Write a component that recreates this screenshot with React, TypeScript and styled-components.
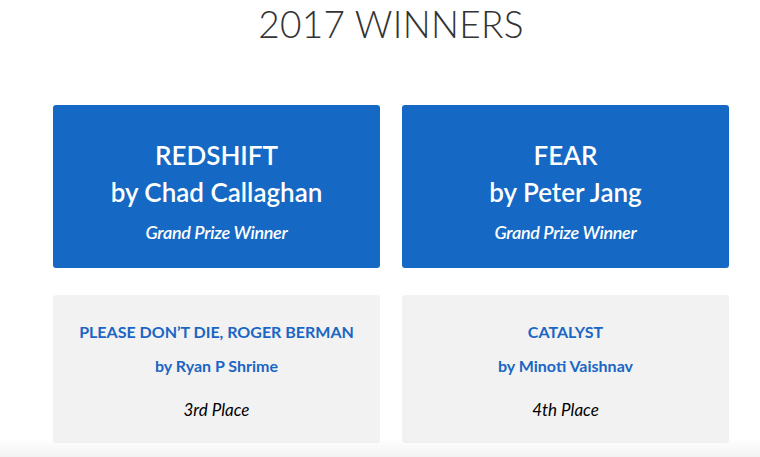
import { createGlobalStyle, styled } from 'styled-components';

interface IWinner {
    title: string
    author: string
    prize: string
}

const grand: IWinner[] = [
    { title: 'REDSHIFT', author: 'by Chad Callaghan', prize: 'Grand Prize Winner' },
    { title: 'FEAR', author: 'by Peter Jang', prize: 'Grand Prize Winner' },
]

const placed: IWinner[] = [
    { title: 'PLEASE DON’T DIE, ROGER BERMAN', author: 'by Ryan P Shrime', prize: '3rd Place' },
    { title: 'CATALYST', author: 'by Minoti Vaishnav', prize: '4th Place' },
]

const App = () => {
    return (
        <Page>
            <GlobalStyle />
            <Heading>2017 WINNERS</Heading>

            <Grid>
                {grand.map(item => (
                    <GrandCard key={item.title}>
                        <GrandTitle>
                            {item.title}
                            <br />
                            {item.author}
                        </GrandTitle>
                        <GrandPrize>{item.prize}</GrandPrize>
                    </GrandCard>
                ))}
                {placed.map(item => (
                    <PlaceCard key={item.title}>
                        <PlaceTitle>{item.title}</PlaceTitle>
                        <PlaceAuthor>{item.author}</PlaceAuthor>
                        <PlacePrize>{item.prize}</PlacePrize>
                    </PlaceCard>
                ))}
            </Grid>

            <BottomFade />
        </Page>
    );
}

export default App;

const GlobalStyle = createGlobalStyle`
    body {
        margin: 0;
        background: #fff;
        font-family: Lato, "Open Sans", sans-serif;
    }
`

const Page = styled.div`
    width: 760px;
    height: 457px;
    overflow: hidden;
    padding: 0 31px 0 53px;
    box-sizing: border-box;
`

const Heading = styled.h1`
    margin: 0;
    padding-top: 2px;
    text-align: center;
    font-size: 37px;
    line-height: 44px;
    font-weight: 300;
    color: #333;
    letter-spacing: 0.3px;
`

const Grid = styled.div`
    display: grid;
    grid-template-columns: 327px 327px;
    column-gap: 22px;
    row-gap: 27px;
    margin-top: 59px;
`

const GrandCard = styled.div`
    height: 163px;
    background: #1569c4;
    border-radius: 3px;
    color: #fff;
    display: flex;
    flex-direction: column;
    align-items: center;
    box-sizing: border-box;
    padding-top: 32px;
`

const GrandTitle = styled.div`
    text-align: center;
    font-size: 26px;
    line-height: 37px;
    font-weight: 600;
`

const GrandPrize = styled.div`
    margin-top: 10px;
    font-size: 18px;
    font-weight: 600;
    font-style: italic;
    letter-spacing: -0.3px;
`

const PlaceCard = styled.div`
    height: 148px;
    background: #f2f2f2;
    border-radius: 3px;
    display: flex;
    flex-direction: column;
    align-items: center;
    box-sizing: border-box;
    padding-top: 27px;
`

const PlaceTitle = styled.div`
    font-size: 16px;
    line-height: 20px;
    font-weight: 700;
    color: #1a66c4;
`

const PlaceAuthor = styled.div`
    margin-top: 14px;
    font-size: 16px;
    line-height: 20px;
    font-weight: 700;
    color: #1a66c4;
`

const PlacePrize = styled.div`
    margin-top: 24px;
    font-size: 17px;
    line-height: 20px;
    font-style: italic;
    font-weight: 400;
    color: #000;
`

const BottomFade = styled.div`
    position: fixed;
    left: 0;
    right: 0;
    bottom: 0;
    height: 18px;
    background: linear-gradient(rgba(0, 0, 0, 0), rgba(0, 0, 0, 0.05));
    pointer-events: none;
`
